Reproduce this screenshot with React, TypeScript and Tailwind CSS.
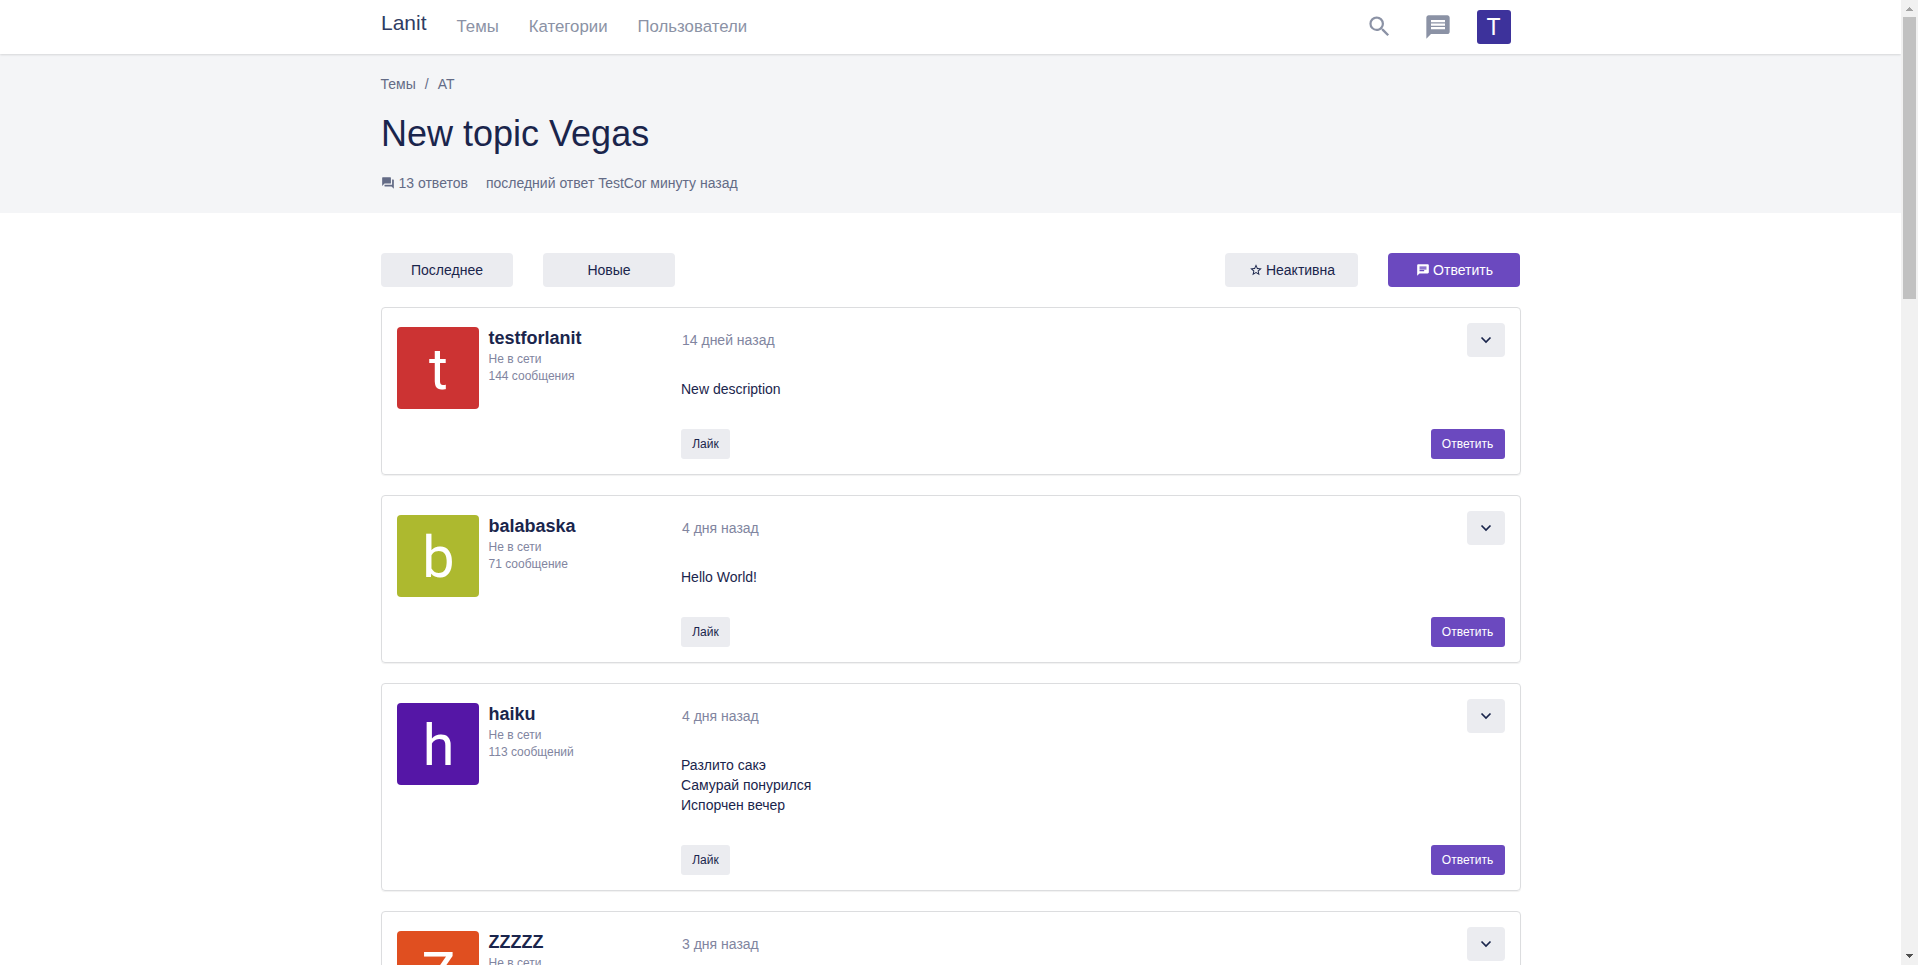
import React from "react";
import { MdSearch, MdMessage, MdForum, MdStarBorder, MdChat } from "react-icons/md";

type Post = {
  name: string;
  letter: string;
  color: string;
  count: string;
  date: string;
  body: string[];
};

const posts: Post[] = [
  { name: "testforlanit", letter: "t", color: "bg-[#cc3333]", count: "144 сообщения", date: "14 дней назад", body: ["New description"] },
  { name: "balabaska", letter: "b", color: "bg-[#adb92f]", count: "71 сообщение", date: "4 дня назад", body: ["Hello World!"] },
  { name: "haiku", letter: "h", color: "bg-[#5516a6]", count: "113 сообщений", date: "4 дня назад", body: ["Разлито сакэ", "Самурай понурился", "Испорчен вечер"] },
  { name: "ZZZZZ", letter: "Z", color: "bg-[#e04f20]", count: "", date: "3 дня назад", body: [] },
];

function Header() {
  return (
    <header className="relative z-10 h-[54px] shrink-0 bg-white shadow-[0_1px_2px_rgba(0,0,0,0.12)]">
      <div className="mx-auto flex h-[54px] w-[1140px] items-center">
        <a className="mb-2 pl-[0.5px] text-[21px] leading-6 text-[#303c62]">Lanit</a>
        <nav className="ml-[30px] flex gap-[30px] text-[16.8px] leading-6 text-[#8b92a5]">
          <a>Темы</a>
          <a>Категории</a>
          <a>Пользователи</a>
        </nav>
        <div className="mr-[10px] ml-auto flex items-center text-[#8b92a5]">
          <MdSearch className="mb-px size-[27px]" />
          <MdMessage className="mb-px ml-[31px] size-[28px]" />
          <div className="ml-[25px] flex size-[34px] items-center justify-center rounded-[3px] bg-[#3d329b] pt-0.5 font-[Roboto,sans-serif] text-[23.5px] leading-none text-white">
            T
          </div>
        </div>
      </div>
    </header>
  );
}

function Banner() {
  return (
    <section className="h-[159px] shrink-0 bg-[#f4f5f7]">
      <div className="mx-auto w-[1140px] pt-5 text-[14px] leading-5 text-[#636b86]">
        <div className="flex">
          <span>Темы</span>
          <span className="px-[9px]">/</span>
          <span>AT</span>
        </div>
        <h1 className="mt-5 pl-[0.5px] text-[36px] leading-10 text-[#1a254c]">New topic Vegas</h1>
        <div className="mt-[19px] flex items-center">
          <MdForum className="size-[14px]" />
          <span className="ml-1">13 ответов</span>
          <span className="ml-[18px]">последний ответ TestCor минуту назад</span>
        </div>
      </div>
    </section>
  );
}

function Toolbar() {
  const base = "flex h-[34px] items-center justify-center rounded-[4px] text-[14px]";
  return (
    <div className="flex gap-[30px] pr-px">
      <button className={base + " w-[132px] bg-[#ebecf0] pl-px"}>Последнее</button>
      <button className={base + " w-[132px] bg-[#ebecf0] pl-px"}>Новые</button>
      <button className={base + " ml-auto w-[133px] gap-[3px] bg-[#ebecf0] pl-[2px]"}>
        <MdStarBorder className="size-[14px]" />
        Неактивна
      </button>
      <button className={base + " w-[132px] gap-[3px] bg-[#6b49bf] pl-[2px] text-white"}>
        <MdChat className="size-[14px]" />
        Ответить
      </button>
    </div>
  );
}

function PostCard({ post }: { post: Post }) {
  return (
    <article className="flex min-h-[168px] rounded-[4px] border border-[#dcdddf] p-[15px] shadow-[0_1px_1px_rgba(0,0,0,0.06)]">
      <div className="flex w-[284.5px] shrink-0 pt-1">
        <div className={"flex size-[82px] items-center justify-center rounded-[4px] pt-[3px] pl-[2px] font-[Roboto,sans-serif] text-[57.500px] leading-none text-white " + post.color}>
          {post.letter}
        </div>
        <div className="ml-[10px] text-[12px] leading-[17px] text-[#8185a0]">
          <div className="text-[18px] leading-[22px] font-bold text-[#1a254c]">{post.name}</div>
          <div className="mt-[2px]">Не в сети</div>
          <div>{post.count}</div>
        </div>
      </div>
      <div className="flex grow flex-col">
        <div className="flex h-[34px] items-center justify-between">
          <span className="ml-px text-[14px] text-[#8185a0]">{post.date}</span>
          <button className="flex h-[34px] w-[38px] items-center justify-center rounded-[4px] bg-[#ebecf0]">
            <svg viewBox="0 0 12 8" className="h-[8px] w-[12px] fill-none stroke-[#1a254c] stroke-[1.7]">
              <path d="M1.500 1.500 6 6l4.500-4.500" />
            </svg>
          </button>
        </div>
        <div className="mt-[22px] text-[14px] leading-5">
          {post.body.map((line) => (
            <p key={line}>{line}</p>
          ))}
        </div>
        {post.body.length > 0 && (
          <div className="mt-[30px] flex justify-between text-[12px]">
            <button className="h-[30px] w-[49px] rounded-[3px] bg-[#ebecf0]">Лайк</button>
            <button className="h-[30px] w-[74px] rounded-[3px] bg-[#6b49bf] text-white">Ответить</button>
          </div>
        )}
      </div>
    </article>
  );
}

function Scrollbar() {
  return (
    <div className="flex w-[17px] shrink-0 flex-col items-center bg-[#f1f1f1]">
      <svg viewBox="0 0 17 17" className="size-[17px] shrink-0 fill-[#a3a3a3]" shapeRendering="crispEdges">
        <path d="M8 7h1v1h1v1h1v1h1v1H5v-1h1V9h1V8h1z" />
      </svg>
      <div className="h-[282px] w-[13px] bg-[#c1c1c1]" />
      <svg viewBox="0 0 17 17" className="mt-auto size-[17px] shrink-0 fill-[#505050]" shapeRendering="crispEdges">
        <path d="M5 6h7v1h-1v1h-1v1H9v1H8V9H7V8H6V7H5z" />
      </svg>
    </div>
  );
}

export default function App() {
  return (
    <div className="flex h-[965px] w-[1918px] overflow-hidden bg-white font-['Liberation_Sans',Arial,sans-serif] text-[#1a254c]">
      <div className="flex w-[1901px] shrink-0 flex-col overflow-hidden">
        <Header />
        <Banner />
        <main className="mx-auto w-[1140px] pt-10">
          <Toolbar />
          <div className="mt-5 flex flex-col gap-5">
            {posts.map((p) => (
              <PostCard key={p.name} post={p} />
            ))}
          </div>
        </main>
      </div>
      <Scrollbar />
    </div>
  );
}
